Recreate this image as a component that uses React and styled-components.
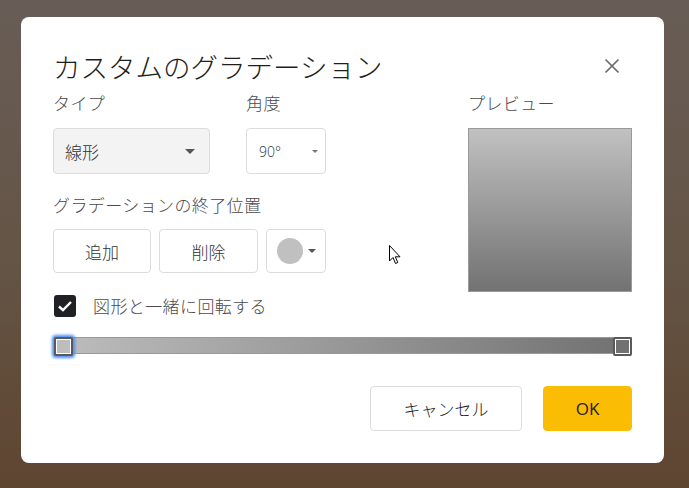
import React from 'react';
import styled, { createGlobalStyle } from 'styled-components';

const GlobalStyle = createGlobalStyle`
  html, body {
    margin: 0;
    padding: 0;
    height: 100%;
  }
  body {
    font-family: "Noto Sans CJK JP", "Noto Sans", sans-serif;
  }
`;

const Backdrop = styled.div`
  position: relative;
  width: 689px;
  height: 488px;
  box-sizing: border-box;
  padding: 17px 0 0 21px;
  background: linear-gradient(180deg, #685d56 0%, #645445 55%, #5e4530 100%);
  overflow: hidden;
`;

const Dialog = styled.div`
  width: 643px;
  height: 446px;
  box-sizing: border-box;
  padding: 31px 32px 32px 32px;
  background: #fff;
  border-radius: 8px;
  display: flex;
  flex-direction: column;
`;

const Header = styled.div`
  display: flex;
  align-items: center;
  justify-content: space-between;
  height: 36px;
`;

const Title = styled.h1`
  margin: 0;
  font-size: 27.5px;
  line-height: 36px;
  font-weight: 300;
  color: #1e1e1e;
`;

const CloseButton = styled.button`
  width: 40px;
  height: 40px;
  border: none;
  background: none;
  padding: 0;
  display: flex;
  align-items: center;
  justify-content: center;
  color: #6b6b6b;
  cursor: pointer;
`;

const Body = styled.div`
  display: grid;
  grid-template-columns: 1fr 164px;
  margin-top: 7px;
`;

const LeftColumn = styled.div`
  display: flex;
  flex-direction: column;
`;

const FieldRow = styled.div`
  display: flex;
  gap: 36px;
`;

const Field = styled.div`
  display: flex;
  flex-direction: column;
  gap: 13px;
`;

const Label = styled.div`
  font-size: 17px;
  line-height: 24px;
  font-weight: 300;
  letter-spacing: 0.4px;
  color: #4a4a4a;
  margin-top: ${({ $top }) => $top || 0}px;
`;

const Select = styled.div`
  box-sizing: border-box;
  width: ${({ $w }) => $w}px;
  height: 46px;
  border: 1px solid #dadce0;
  border-radius: 4px;
  background: ${({ $filled }) => ($filled ? '#f3f3f3' : '#fff')};
  display: flex;
  align-items: center;
  justify-content: space-between;
  padding: ${({ $pad }) => $pad};
  font-size: ${({ $fs }) => $fs}px;
  font-weight: 300;
  color: #333;
  font-family: ${({ $latin }) =>
    $latin ? '"Open Sans", "Noto Sans", sans-serif' : '"Noto Sans CJK JP", sans-serif'};
`;

const Caret = styled.span`
  width: 0;
  height: 0;
  border-left: ${({ $s }) => $s}px solid transparent;
  border-right: ${({ $s }) => $s}px solid transparent;
  border-top: ${({ $s }) => $s}px solid ${({ $c }) => $c || '#555'};
`;

const ButtonRow = styled.div`
  display: flex;
  gap: 8px;
  margin-top: 12px;
`;

const Button = styled.button`
  box-sizing: border-box;
  width: ${({ $w }) => $w}px;
  height: 44px;
  border: 1px solid #dadce0;
  border-radius: 4px;
  background: #fff;
  font-family: "Noto Sans CJK JP", sans-serif;
  font-size: 17px;
  font-weight: 300;
  color: #333;
  padding: 0;
  display: flex;
  align-items: center;
  justify-content: center;
  gap: 5px;
`;

const Swatch = styled.span`
  width: 26px;
  height: 26px;
  border-radius: 50%;
  background: #c0c0c0;
`;

const CheckRow = styled.label`
  display: flex;
  align-items: center;
  gap: 17px;
  margin-top: 20px;
  padding-left: 1px;
  font-size: 17px;
  font-weight: 300;
  letter-spacing: 0.4px;
  color: #4a4a4a;
`;

const CheckBox = styled.span`
  width: 22px;
  height: 22px;
  border-radius: 3px;
  background: #202124;
  display: flex;
  align-items: center;
  justify-content: center;
`;

const RightColumn = styled.div`
  display: flex;
  flex-direction: column;
  gap: 13px;
`;

const Preview = styled.div`
  width: 164px;
  height: 164px;
  box-sizing: border-box;
  border: 1px solid #9a9a9a;
  background: linear-gradient(180deg, #c1c1c1 0%, #727272 100%);
`;

const Slider = styled.div`
  position: relative;
  height: 18px;
  margin-top: 19px;
  margin-left: 1px;
  display: flex;
  align-items: center;
`;

const Track = styled.div`
  flex: 1;
  height: 17px;
  box-sizing: border-box;
  border: 1px solid #999;
  background: linear-gradient(90deg, #bdbdbd 0%, #717171 100%);
`;

const Handle = styled.span`
  position: absolute;
  top: 0;
  ${({ $side }) => $side}: 0;
  width: 19px;
  height: 19px;
  box-sizing: border-box;
  border: 2px solid #595959;
  border-radius: 2px;
  background: ${({ $fill }) => $fill};
  box-shadow: inset 0 0 0 1px #fff
    ${({ $active }) => ($active ? ', 0 0 3px 2px #4d8df5' : '')};
`;

const Footer = styled.div`
  display: flex;
  justify-content: flex-end;
  gap: 21px;
  margin-top: 32px;
`;

const FooterButton = styled.button`
  box-sizing: border-box;
  width: ${({ $w }) => $w}px;
  height: 45px;
  border-radius: 4px;
  border: 1px solid ${({ $primary }) => ($primary ? '#fbbc04' : '#dadce0')};
  background: ${({ $primary }) => ($primary ? '#fbbc04' : '#fff')};
  color: #222;
  font-family: ${({ $primary }) =>
    $primary ? '"Open Sans", "Noto Sans", sans-serif' : '"Noto Sans CJK JP", sans-serif'};
  font-size: 17px;
  font-weight: ${({ $primary }) => ($primary ? 400 : 300)};
  padding: 0;
`;

const Pointer = styled.svg`
  position: absolute;
  left: 389px;
  top: 245px;
`;

const App = () => (
  <>
    <GlobalStyle />
    <Backdrop>
      <Dialog>
        <Header>
          <Title>カスタムのグラデーション</Title>
          <CloseButton aria-label="閉じる">
            <svg width="16" height="16" viewBox="0 0 16 16">
              <path d="M1.5 1.5 L14.5 14.5 M14.5 1.5 L1.5 14.5" stroke="currentColor" strokeWidth="1.7" />
            </svg>
          </CloseButton>
        </Header>
        <Body>
          <LeftColumn>
            <FieldRow>
              <Field>
                <Label>タイプ</Label>
                <Select $w={157} $filled $fs={17} $pad="0 14px 0 11px">
                  線形
                  <Caret $s={5} />
                </Select>
              </Field>
              <Field>
                <Label>角度</Label>
                <Select $w={80} $fs={14} $latin $pad="0 7px 0 12px">
                  90°
                  <Caret $s={3} $c="#777" />
                </Select>
              </Field>
            </FieldRow>
            <Label $top={19}>グラデーションの終了位置</Label>
            <ButtonRow>
              <Button $w={98}>追加</Button>
              <Button $w={99}>削除</Button>
              <Button $w={60}>
                <Swatch />
                <Caret $s={4} />
              </Button>
            </ButtonRow>
            <CheckRow>
              <CheckBox>
                <svg width="16" height="16" viewBox="0 0 16 16">
                  <path d="M2 8.5 L6 12.2 L14 4" fill="none" stroke="#fff" strokeWidth="2.4" />
                </svg>
              </CheckBox>
              図形と一緒に回転する
            </CheckRow>
          </LeftColumn>
          <RightColumn>
            <Label>プレビュー</Label>
            <Preview />
          </RightColumn>
        </Body>
        <Slider>
          <Track />
          <Handle $side="left" $fill="#bdbdbd" $active />
          <Handle $side="right" $fill="#717171" />
        </Slider>
        <Footer>
          <FooterButton $w={152}>キャンセル</FooterButton>
          <FooterButton $w={89} $primary>OK</FooterButton>
        </Footer>
      </Dialog>
      <Pointer width="13" height="21" viewBox="0 0 13 21">
        <path d="M0.5 0.5 L0.5 16 L4 12.5 L6.5 18.5 L8.8 17.5 L6.3 11.8 L11 11.8 Z" fill="#fff" stroke="#000" strokeWidth="1" strokeLinejoin="round" />
      </Pointer>
    </Backdrop>
  </>
);

export default App;
